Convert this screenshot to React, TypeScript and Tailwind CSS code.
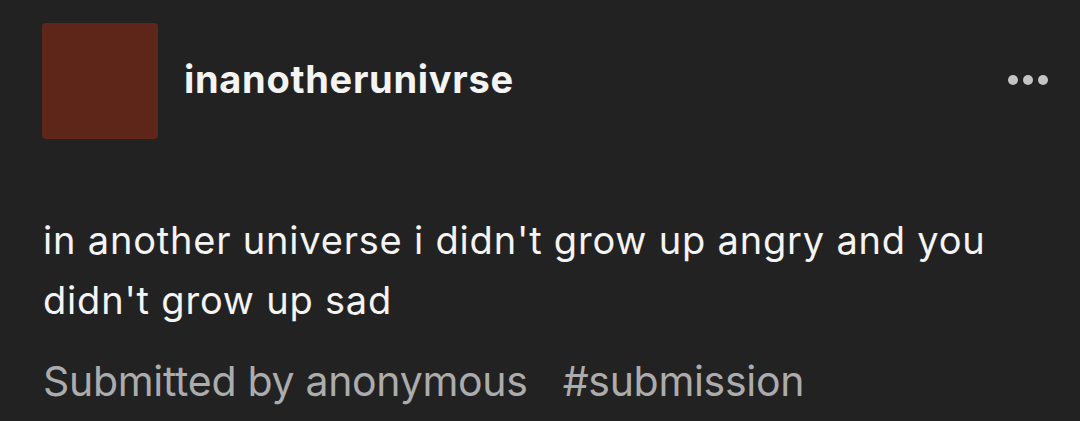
export default function App() {
  return (
    <div className="w-[1080px] h-[421px] overflow-hidden bg-[#222222] text-white" style={{ fontFamily: "Inter, 'Noto Sans', sans-serif" }}>
      <div className="flex items-center pl-[42px] pr-[32px] pt-[23px]">
        <div className="w-[116px] h-[116px] rounded-[4px] bg-[#5e2618]" />
        <div className="ml-[26px] text-[38px] font-bold tracking-[0.7px] text-[#f4f4f4] leading-none pb-[4px]">inanotherunivrse</div>
        <div className="ml-auto flex gap-[5px] pb-[2px]">
          <span className="w-[10px] h-[10px] rounded-full bg-[#c4c4c4]" />
          <span className="w-[10px] h-[10px] rounded-full bg-[#c4c4c4]" />
          <span className="w-[10px] h-[10px] rounded-full bg-[#c4c4c4]" />
        </div>
      </div>
      <p className="mt-[71px] px-[43px] text-[38px] leading-[60px] text-[#f4f4f4] tracking-[0.8px]">
        in another universe i didn't grow up angry and you<br />didn't grow up sad
      </p>
      <div className="mt-[29px] px-[43px] text-[41px] leading-[44px] text-[#acacac] flex gap-[35px] tracking-[-0.3px]">
        <span>Submitted by anonymous</span>
        <span>#submission</span>
      </div>
    </div>
  );
}
